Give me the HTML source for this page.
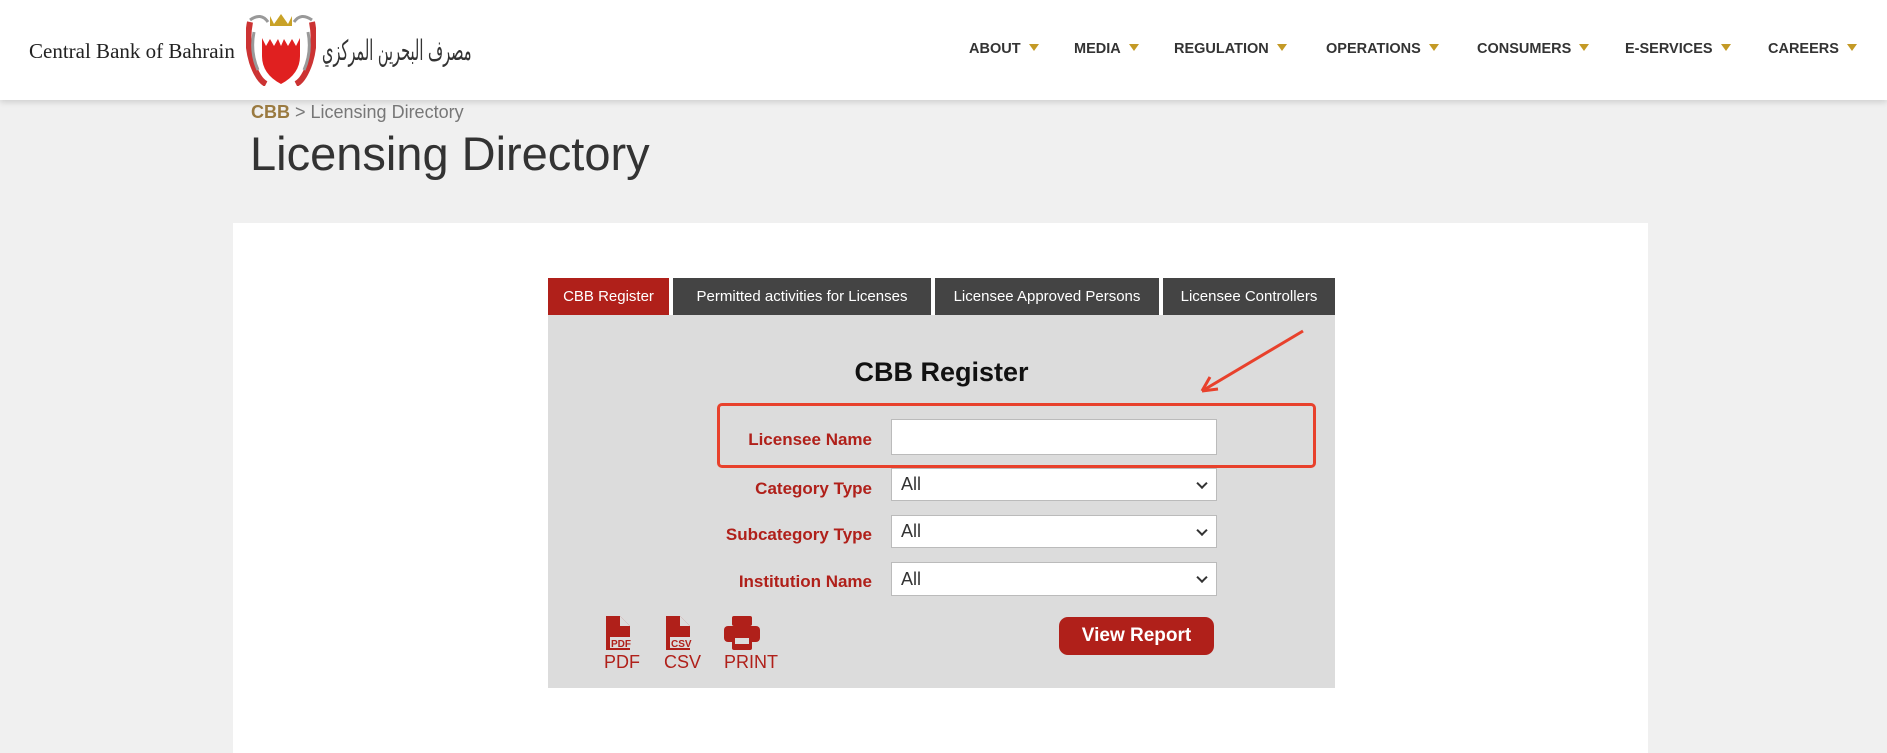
<!DOCTYPE html>
<html><head><meta charset="utf-8">
<style>
*{margin:0;padding:0;box-sizing:border-box}
body{width:1887px;height:744px;background:#f0f0f0;font-family:"Liberation Sans",sans-serif;position:relative;overflow:hidden}
.hdr{position:absolute;left:0;top:0;width:1887px;height:100px;background:#fff;box-shadow:0 2px 6px rgba(0,0,0,.15)}
.abs{position:absolute;white-space:nowrap}
.nav{font-weight:bold;font-size:14.5px;color:#333;top:41px}
.nav i{display:inline-block;width:0;height:0;border-left:5px solid transparent;border-right:5px solid transparent;border-top:7px solid #c49a26;margin-left:8px;vertical-align:2px}
.tab{position:absolute;top:278px;height:37px;background:#444;color:#fff;font-size:15px;line-height:37px;text-align:center}
.lbl{position:absolute;right:1015px;color:#b0201a;font-weight:bold;font-size:17px}
.sel{position:absolute;left:891px;width:326px;background:#fff;border:1px solid #bbb;font-size:18px;color:#333;padding-left:9px}
.dd:after{content:"";position:absolute;right:10px;top:50%;width:6px;height:6px;border-right:2px solid #333;border-bottom:2px solid #333;transform:translateY(-70%) rotate(45deg)}
.ic{position:absolute;top:616px;color:#b0201a}
.ic span{position:absolute;top:36px;left:0;font-size:18px}
</style></head><body>
<div class="hdr"></div>
<div class="abs" style="left:29px;top:39px;font-family:'Liberation Serif',serif;font-size:21px;color:#222">Central Bank of Bahrain</div>
<svg class="abs" style="left:246px;top:12px" width="70" height="74" viewBox="0 0 70 74">
<path d="M4 10 Q0 30 6 50 Q12 68 20 72 M66 10 Q70 30 64 50 Q58 68 50 72" stroke="#c33" stroke-width="6" fill="none"/>
<path d="M4 8 Q15 0 22 10 M48 10 Q55 0 66 8 M8 20 Q4 40 12 58 M62 20 Q66 40 58 58" stroke="#999" stroke-width="3" fill="none"/>
<path d="M24 4 L28 12 L35 2 L42 12 L46 4 L46 14 L24 14Z" fill="#c9a227"/>
<path d="M16 14 H54 V44 Q54 62 35 72 Q16 62 16 44Z" fill="#e02020"/>
<path d="M16 14 H54 V26 L50 34 L46 27 L42 34 L38 27 L35 34 L32 27 L28 34 L24 27 L20 34 L16 26Z" fill="#fff"/>
</svg>
<div class="abs" style="left:322px;top:34px;width:160px;height:44px;overflow:visible"><div style="font-family:'DejaVu Sans',sans-serif;font-size:28px;color:#333;transform:scaleX(0.52);transform-origin:0 0;white-space:nowrap">مصرف البحرين المركزي</div></div>
<div class="abs nav" style="left:969px">ABOUT<i></i></div>
<div class="abs nav" style="left:1074px">MEDIA<i></i></div>
<div class="abs nav" style="left:1174px">REGULATION<i></i></div>
<div class="abs nav" style="left:1326px">OPERATIONS<i></i></div>
<div class="abs nav" style="left:1477px">CONSUMERS<i></i></div>
<div class="abs nav" style="left:1625px">E-SERVICES<i></i></div>
<div class="abs nav" style="left:1768px">CAREERS<i></i></div>
<div class="abs" style="left:251px;top:102px;font-size:18px;color:#777"><b style="color:#9a7a40">CBB</b> &gt; Licensing Directory</div>
<div class="abs" style="left:250px;top:126px;font-size:47px;color:#333">Licensing Directory</div>
<div class="abs" style="left:233px;top:223px;width:1415px;height:530px;background:#fff"></div>
<div class="abs" style="left:548px;top:315px;width:787px;height:373px;background:#dcdcdc"></div>
<div class="tab" style="left:548px;width:121px;background:#b0201a">CBB Register</div>
<div class="tab" style="left:673px;width:258px">Permitted activities for Licenses</div>
<div class="tab" style="left:935px;width:224px">Licensee Approved Persons</div>
<div class="tab" style="left:1163px;width:172px">Licensee Controllers</div>
<div class="abs" style="left:548px;width:787px;top:357px;text-align:center;font-size:27px;font-weight:bold;color:#111">CBB Register</div>
<div class="abs" style="left:717px;top:403px;width:599px;height:65px;border:3px solid #e8412c;border-radius:5px"></div>
<svg class="abs" style="left:1190px;top:325px" width="120" height="75"><path d="M113 6 L12 66" stroke="#e8412c" stroke-width="3"/><path d="M12 66 L20 52 M12 66 L28 64" stroke="#e8412c" stroke-width="3" fill="none"/></svg>
<div class="lbl" style="top:430px">Licensee Name</div>
<div class="sel" style="top:419px;height:36px"></div>
<div class="lbl" style="top:479px">Category Type</div>
<div class="sel dd" style="top:468px;height:33px;line-height:31px">All</div>
<div class="lbl" style="top:525px">Subcategory Type</div>
<div class="sel dd" style="top:515px;height:33px;line-height:31px">All</div>
<div class="lbl" style="top:572px">Institution Name</div>
<div class="sel dd" style="top:562px;height:34px;line-height:32px">All</div>
<div class="ic" style="left:604px"><svg width="30" height="34"><path d="M2 0 H16 L26 10 V34 H2Z" fill="#b0201a"/><path d="M16 0 V10 H26" fill="#dcdcdc"/><rect x="6" y="21" width="24" height="11" fill="#dcdcdc"/><text x="7" y="31" font-size="10" font-weight="bold" fill="#b0201a" font-family="Liberation Sans">PDF</text></svg><span>PDF</span></div>
<div class="ic" style="left:664px"><svg width="32" height="34"><path d="M2 0 H16 L26 10 V34 H2Z" fill="#b0201a"/><path d="M16 0 V10 H26" fill="#dcdcdc"/><rect x="6" y="21" width="26" height="11" fill="#dcdcdc"/><text x="7" y="31" font-size="10" font-weight="bold" fill="#b0201a" font-family="Liberation Sans">CSV</text></svg><span>CSV</span></div>
<div class="ic" style="left:724px"><svg width="36" height="34"><rect x="8" y="0" width="20" height="10" rx="2" fill="#b0201a"/><rect x="0" y="10" width="36" height="16" rx="4" fill="#b0201a"/><rect x="8" y="20" width="20" height="14" rx="2" fill="#b0201a"/><rect x="11" y="22" width="14" height="6" fill="#dcdcdc"/></svg><span>PRINT</span></div>
<div class="abs" style="left:1059px;top:617px;width:155px;height:38px;background:#b0201a;border-radius:9px;color:#fff;font-weight:bold;font-size:19px;line-height:38px;text-align:center">View Report</div>
</body></html>
